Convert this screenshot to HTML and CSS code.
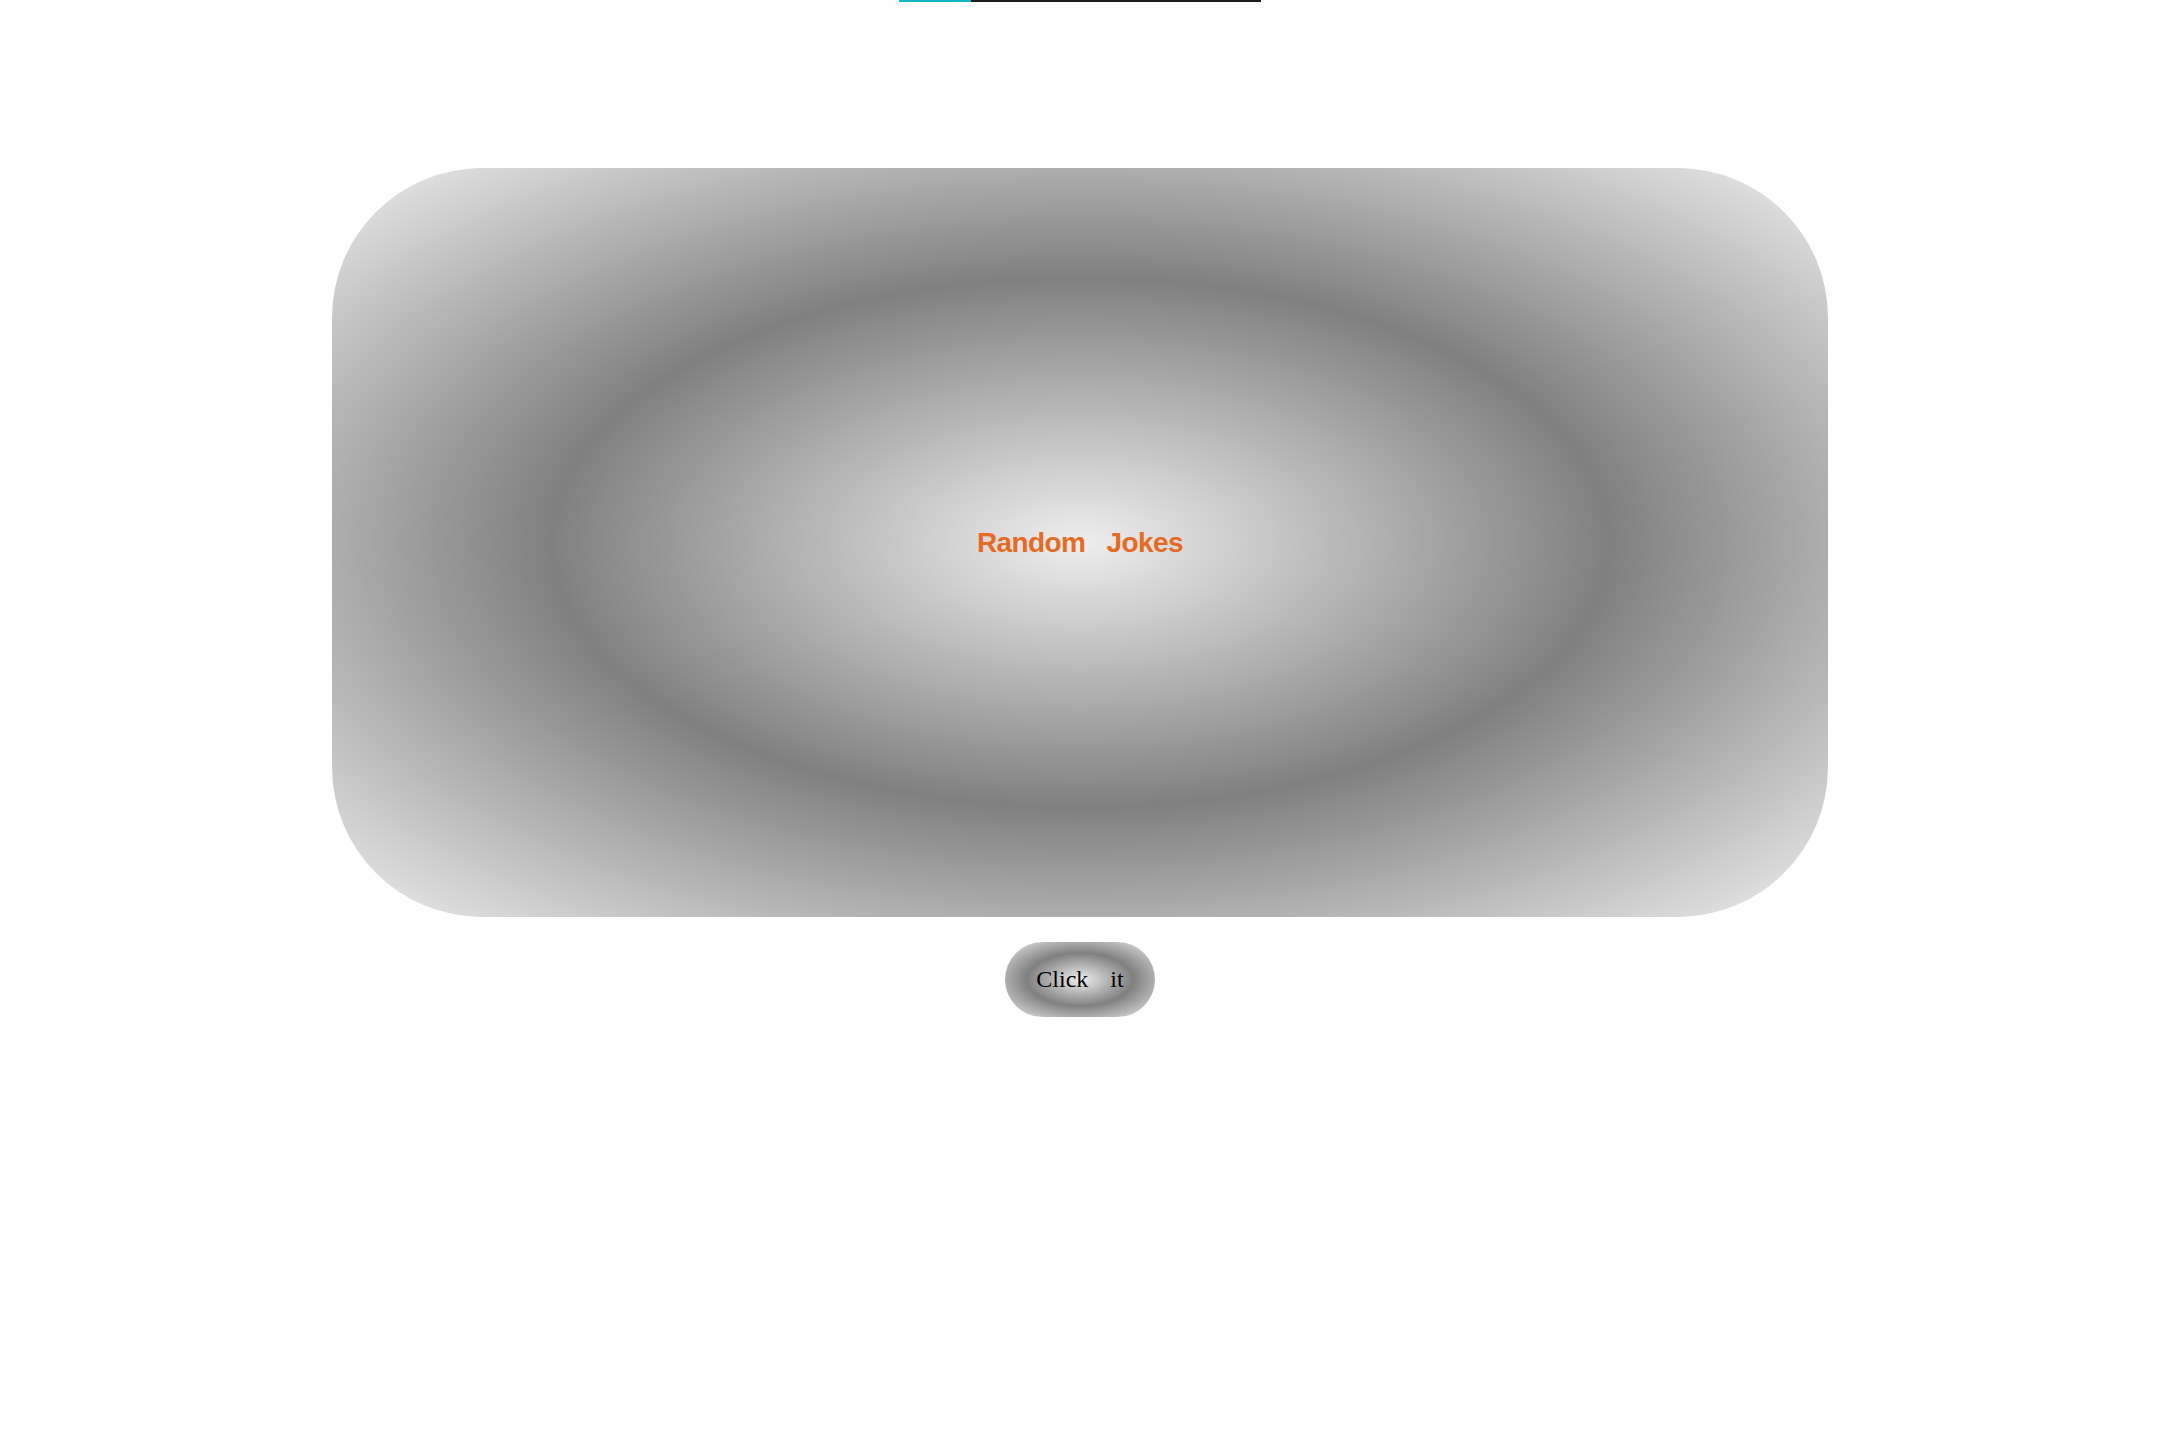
FILE: index.html
```html
<!DOCTYPE html>
<html lang="en">
<head>
<meta charset="utf-8">
<title>Random Jokes</title>
<link rel="stylesheet" href="styles.css">
</head>
<body>
<div class="progress"><div class="progress-fill"></div></div>
<main class="page">
  <section class="card">
    <h1 class="title">Random Jokes</h1>
  </section>
  <button class="btn" type="button">Click it</button>
</main>
</body>
</html>
```
FILE: styles.css
```css
html, body {
  margin: 0;
  padding: 0;
  background: #fefefe;
}
body {
  font-family: "Liberation Serif", "Times New Roman", serif;
}
.progress {
  width: 362px;
  height: 2px;
  margin: 0 auto;
  background: #1c1c1c;
  display: flex;
}
.progress-fill {
  width: 72px;
  background: #14b6c6;
}
.page {
  display: flex;
  flex-direction: column;
  align-items: center;
  padding-top: 166px;
}
.card {
  width: 1496px;
  height: 749px;
  border-radius: 150px;
  background: radial-gradient(#eeeeee, #808080, #eeeeee);
  display: flex;
  align-items: center;
  justify-content: center;
}
.title {
  margin: 0;
  font-family: "Liberation Sans", Arial, sans-serif;
  font-weight: bold;
  font-size: 28px;
  color: #e56b25;
  word-spacing: 14px;
  letter-spacing: -0.6px;
}
.btn {
  margin-top: 25px;
  width: 150px;
  height: 75px;
  border: none;
  border-radius: 40px;
  background: radial-gradient(#eeeeee, #808080, #eeeeee);
  font-family: "Liberation Serif", "Times New Roman", serif;
  font-size: 24px;
  color: #000;
  word-spacing: 16px;
  padding: 0;
}
```
